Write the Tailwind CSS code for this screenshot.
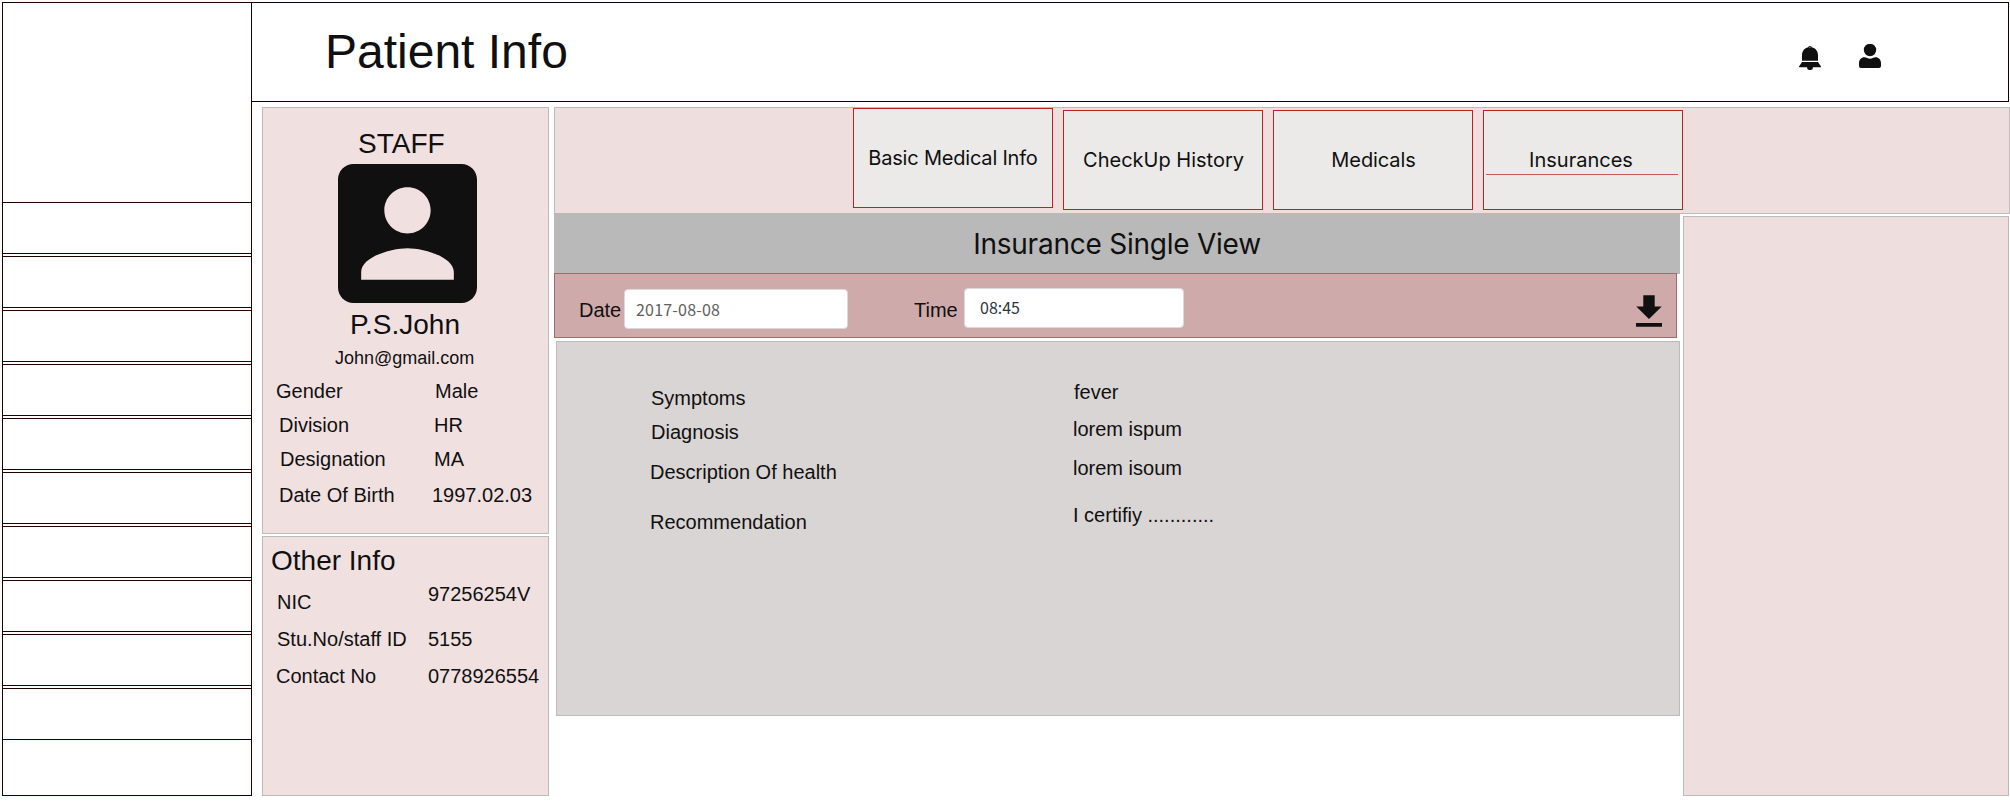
<!DOCTYPE html>
<html lang="en">
<head>
<meta charset="utf-8">
<title>Patient Info</title>
<script src="https://cdn.jsdelivr.net/npm/@tailwindcss/browser@4"></script>
</head>
<body class="bg-white">
<div class="flex h-[801px] w-[2010px] overflow-hidden pt-0.5 pl-0.5 font-['Liberation_Sans',sans-serif] text-[20px] leading-6 whitespace-nowrap text-[#101010]">

  <!-- Sidebar -->
  <nav class="flex h-[794px] w-[250px] shrink-0 flex-col gap-0.5 border border-[#220000] pt-[199px]">
    <div class="h-[52px] shrink-0 border-y border-[#220000]"></div>
    <div class="h-[52px] shrink-0 border-y border-[#220000]"></div>
    <div class="h-[52px] shrink-0 border-y border-[#220000]"></div>
    <div class="h-[52px] shrink-0 border-y border-[#220000]"></div>
    <div class="h-[52px] shrink-0 border-y border-[#220000]"></div>
    <div class="h-[52px] shrink-0 border-y border-[#220000]"></div>
    <div class="h-[52px] shrink-0 border-y border-[#220000]"></div>
    <div class="h-[52px] shrink-0 border-y border-[#220000]"></div>
    <div class="h-[52px] shrink-0 border-y border-[#220000]"></div>
    <div class="h-[52px] shrink-0 border-y border-[#220000]"></div>
  </nav>

  <div class="flex shrink-0 flex-col">
    <!-- Header -->
    <header class="-ml-px flex h-[100px] w-[1758px] justify-between border border-[#160005] pr-[127px] pl-[73px]">
      <h1 class="mt-[21px] text-[48px] leading-[56px]">Patient Info</h1>
      <div class="flex items-start gap-[38px] pt-[38px]">
        <svg class="mt-[3px] h-[26px] w-[22px]" viewBox="0 0 22 26" fill="#101010"><path d="M9.2 3.2a1.9 1.9 0 0 1 3.6 0C16.600 4.100 19 7.200 19 11v5.700H3V11c0-3.800 2.400-6.900 6.200-7.800z"/><circle cx="11" cy="3.300" r=".8" fill="#888"/><path d="M3 18h16l3 4.500v.7h-8a3 2.900 0 0 1-6 0H0v-.7z"/></svg>
        <svg class="mt-[3px] h-[24px] w-[22px]" viewBox="0 0 22 24" fill="#101010"><circle cx="11" cy="6" r="6.200"/><path d="M5.500 13.300C7.500 13.300 9 14.800 11 14.800s3.500-1.500 5.500-1.500c3.300 0 5.500 2.600 5.500 6V22q0 2-2 2H2q-2 0-2-2v-2.700c0-3.400 2.200-6 5.500-6z"/></svg>
      </div>
    </header>

    <div class="mt-[5px] flex gap-[5px] pl-[10px]">
      <!-- Person -->
      <aside class="flex w-[287px] flex-col gap-0.5">
        <section class="h-[427px] border border-[#bbb] bg-[#f1e0e0] pt-5">
          <h2 class="pl-[95px] text-[28px] leading-8">STAFF</h2>
          <svg class="mt-1 ml-[75px] h-[139px] w-[139px]" viewBox="3 3 18 18" fill="#101010"><path d="M3 5v14c0 1.100.89 2 2 2h14c1.100 0 2-.9 2-2V5c0-1.100-.9-2-2-2H5c-1.110 0-2 .9-2 2zm12 4c0 1.660-1.340 3-3 3s-3-1.340-3-3 1.340-3 3-3 3 1.340 3 3zm-9 8c0-2 4-3.100 6-3.100s6 1.100 6 3.100v1H6v-1z"/></svg>
          <p class="mt-1.5 pl-[87px] text-[28px] leading-8">P.S.John</p>
          <p class="mt-[7px] pl-[72px] text-[18px] leading-5">John@gmail.com</p>
          <div class="mt-[11px] flex pl-[13px]"><span class="w-[159px]">Gender</span><span>Male</span></div>
          <div class="mt-[10px] flex pl-4"><span class="w-[155px]">Division</span><span>HR</span></div>
          <div class="mt-[10px] flex pl-[17px]"><span class="w-[154px]">Designation</span><span>MA</span></div>
          <div class="mt-3 flex pl-4"><span class="w-[153px]">Date Of Birth</span><span>1997.02.03</span></div>
        </section>
        <section class="h-[260px] border border-[#bbb] bg-[#f1e0e0] pt-2">
          <h2 class="pl-2 text-[28px] leading-8">Other Info</h2>
          <div class="mt-[5px] flex h-8 pl-[14px]"><span class="w-[151px] pt-2">NIC</span><span>97256254V</span></div>
          <div class="mt-[13px] flex pl-[14px]"><span class="w-[151px]">Stu.No/staff ID</span><span>5155</span></div>
          <div class="mt-[13px] flex pl-[13px]"><span class="w-[152px]">Contact No</span><span>0778926554</span></div>
        </section>
      </aside>

      <main class="flex w-[1456px] flex-col">
        <!-- Tabs -->
        <div class="flex h-[107px] gap-[10px] border border-[#bbb] bg-[#eedede] pl-[298px] font-[Inter,sans-serif]">
          <div class="flex h-[100px] w-[200px] items-center justify-center border border-[#bb2222] bg-[#ebeae8] tracking-[-0.2px]">Basic Medical Info</div>
          <div class="mt-0.5 flex h-[100px] w-[200px] items-center justify-center border border-[#bb2222] bg-[#ebeae8] pl-px">CheckUp History</div>
          <div class="mt-0.5 flex h-[100px] w-[200px] items-center justify-center border border-[#bb2222] bg-[#ebeae8] pl-px tracking-[-0.1px]">Medicals</div>
          <div class="mt-0.5 flex h-[100px] w-[200px] flex-col border border-[#bb2222] bg-[#ebeae8] pt-[37px]">
            <span class="self-center pr-1">Insurances</span>
            <span class="mt-0.5 ml-0.5 h-px w-[192px] bg-[#c4585a]"></span>
          </div>
        </div>

        <div class="flex">
          <div class="-mt-px flex w-[1126px] flex-col">
            <h2 class="flex h-[61px] items-center justify-center bg-[#b9b9b9] font-[Inter,sans-serif] text-[28px] tracking-[-0.24px]">Insurance Single View</h2>
            <div class="-mt-px flex h-[65px] w-[1123px] items-start border border-[#966e6e] bg-[#ceaaaa]">
              <span class="mt-6 ml-6 w-[45px]">Date</span>
              <div class="mt-[15px] h-10 w-[224px] rounded-[4px] border border-[#dcd8da] bg-white pl-[11px] font-['Noto_Sans_CJK_SC',sans-serif] text-[16px] leading-[38px] tracking-[0.2px] text-[#606060]">2017-08-08</div>
              <span class="mt-6 ml-[66px] w-[50px]">Time</span>
              <div class="mt-[14px] h-10 w-[220px] rounded-[4px] border border-[#dcd8e0] bg-white pl-[15px] font-['Noto_Sans_CJK_SC',sans-serif] text-[16px] leading-[36px] text-[#2c3440]">08:45</div>
              <svg class="mt-[21px] ml-[452px] h-8 w-[26px]" viewBox="0 0 26 32" fill="#101010"><path d="M7.300.3h11.400v11.200H25.700L13 24 .3 11.500h7zM0 28h26v3.800H0z"/></svg>
            </div>
            <div class="mt-[3px] ml-0.5 flex h-[375px] w-[1124px] border border-[#bbb] bg-[#d9d5d4]">
              <div class="flex w-[515px] flex-col pt-[44px] pl-[93px]">
                <span class="pl-px">Symptoms</span>
                <span class="mt-[10px] pl-px">Diagnosis</span>
                <span class="mt-4">Description Of health</span>
                <span class="mt-[26px]">Recommendation</span>
              </div>
              <div class="flex flex-col pt-[38px] pl-px">
                <span class="pl-px">fever</span>
                <span class="mt-[13px]">lorem ispum</span>
                <span class="mt-[15px]">lorem isoum</span>
                <span class="mt-[23px]">I certifiy ............</span>
              </div>
            </div>
          </div>
          <section class="mt-0.5 ml-[3px] h-[580px] w-[326px] border border-[#bbb] bg-[#eedede]"></section>
        </div>
      </main>
    </div>
  </div>
</div>
</body>
</html>
